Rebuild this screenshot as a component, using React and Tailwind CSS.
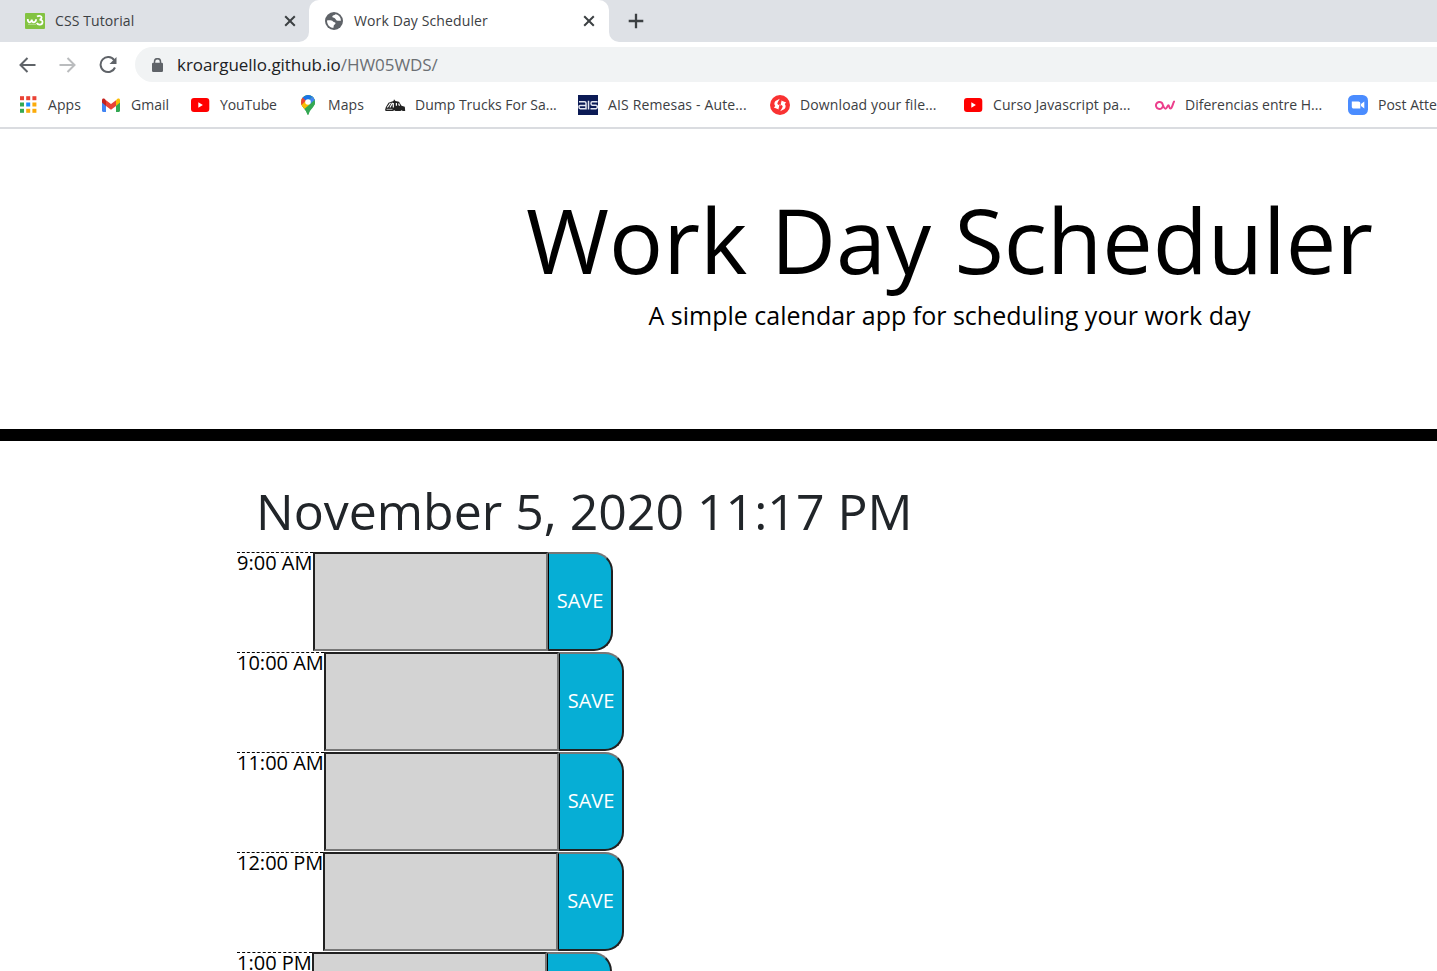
import React from "react";

const chromeFont = "font-['Open_Sans',sans-serif]";

function AppsIcon() {
  const c = ["#ea4335", "#ea4335", "#ea4335", "#34a853", "#1a8cff", "#fbab0a", "#34a853", "#fbab0a", "#fbab0a"];
  return (
    <svg width="20" height="20" viewBox="0 0 20 20">
      {c.map((f, i) => (
        <rect key={i} x={2 + (i % 3) * 6.2} y={1.2 + Math.floor(i / 3) * 6.3} width="4" height="4" fill={f} />
      ))}
    </svg>
  );
}

function GmailIcon() {
  return (
    <svg width="20" height="20" viewBox="0 0 20 20">
      <path d="M1 6v9.800c0 .7.5 1.200 1.200 1.200H5V8.500z" fill="#4285f4" />
      <path d="M15 8.500V17h2.800c.7 0 1.200-.5 1.200-1.200V6z" fill="#34a853" />
      <path d="M5 5.200V11l5 3.800 5-3.800V5.200L10 9z" fill="#ea4335" />
      <path d="M1 5v2.600L5 11V5.200L3.800 4C2.500 3 1 3.600 1 5z" fill="#c5221f" />
      <path d="M19 5v2.600L15 11V5.200L16.200 4C17.500 3 19 3.600 19 5z" fill="#fbbc04" />
    </svg>
  );
}

function YouTubeIcon() {
  return (
    <svg width="20" height="20" viewBox="0 0 20 20">
      <rect x="0" y="3" width="18.300" height="14" rx="3" fill="#f00" />
      <path d="M7.300 7.300v5.400l4.600-2.700z" fill="#fff" />
    </svg>
  );
}

function MapsIcon() {
  return (
    <svg width="18" height="20" viewBox="0 0 18 20">
      <defs>
        <clipPath id="pin">
          <path d="M8 0a7 7 0 0 0-7 7c0 2 .7 3.500 1.800 5C4.700 14.500 6.500 16 7.200 19c.3 1.200 1.300 1.200 1.600 0 .7-3 2.500-4.500 4.400-7C14.300 10.500 15 9 15 7a7 7 0 0 0-7-7z" />
        </clipPath>
      </defs>
      <g clipPath="url(#pin)">
        <path d="M0 0h18v20H0z" fill="#34a853" />
        <path d="M0 3L6 6.500 8 7 2 14H0z" fill="#fbbc04" />
        <path d="M0 2l4.500 .2L8 6 2 11.500 0 8z" fill="#ea4335" />
        <path d="M2.500 2.500L7 6.500 13 1 8-1z" fill="#1a73e8" />
        <path d="M7 7.500L13 .8 17 6.500 11 7z" fill="#4285f4" />
        <path d="M12.500 1L16 5v4l-6 5-3 6-4.500-8z" fill="#34a853" />
        <path d="M8 6.500L12.700 1 15 4.500 10 9z" fill="#4285f4" />
        <path d="M1 10.500L5.500 6 9.500 9.500 3.800 14.500z" fill="#fbbc04" />
      </g>
      <circle cx="8" cy="7" r="2.800" fill="#fff" />
    </svg>
  );
}

function TruckIcon() {
  return (
    <svg width="21" height="20" viewBox="0 0 21 20">
      <path d="M0 15.300l.8-3 2.700-4.500L8.500 6l.5-1.700L10.500 6l3.500.8 2.500 4 3.300 1 .4 4.200h-2.500l-1-.8-1.300.8h-5l-1-.8-1.500.8H1z" fill="#222" />
      <path d="M2.300 12.500L5.500 8M5 12.500l2.500-4.700M8.300 8v4.500M11.400 8v2.800M13.600 8.500l.9 2.300" stroke="#fff" strokeWidth="1.200" />
      <path d="M1.500 14.300h6" stroke="#ddd" strokeWidth=".8" />
    </svg>
  );
}

function AisIcon() {
  return (
    <svg width="20" height="20" viewBox="0 0 20 20">
      <path d="M0 0h20v20H0z" fill="#0b1a55" />
      <path d="M1 6.700h5.500q1.500 0 1.500 1.500V13.700H2.300q-1.300 0-1.300-1.700t1.300-1.600H8M10.500 5.800v8.800M19.500 6.700h-5.300q-1.200 0-1.200 1.700t1.200 1.800h3.800q1.300 0 1.300 1.700t-1.300 1.800H12.500" fill="none" stroke="#e4e6f0" strokeWidth="1.500" />
    </svg>
  );
}

function DownloadIcon() {
  return (
    <svg width="20" height="20" viewBox="0 0 20 20">
      <circle cx="10" cy="10" r="10" fill="#f93232" />
      <path d="M9.800 3.800L5.500 6Q3.300 8.800 5.300 11L3.800 12.500 8.800 14.500 10 9.300 8.200 9.900Q6.500 8.500 8 6.800z" fill="#fff" />
      <path d="M10.200 16.200L14.500 14Q16.700 11.200 14.700 9L16.200 7.500 11.200 5.500 10 10.700 11.800 10.100Q13.500 11.500 12 13.200z" fill="#fff" />
      <path d="M11.200 5.500L8.800 14.500" stroke="#f93232" strokeWidth=".9" />
    </svg>
  );
}

function OwIcon() {
  return (
    <svg width="20" height="20" viewBox="0 0 20 20">
      <path d="M8 10.500a3.500 3.500 0 1 1-1.200-2.700C8 9 8.500 13.700 10.500 13.700c1.600 0 1.700-3.500 3-3.500.8 0 .5 3.300 2 3.300 1.700 0 2.300-5 3.600-7" fill="none" stroke="#ec3f8c" strokeWidth="2" strokeLinecap="round" />
    </svg>
  );
}

function ZoomIcon() {
  return (
    <svg width="20" height="20" viewBox="0 0 20 20">
      <rect width="20" height="20" rx="5.500" fill="#4a8cff" />
      <path d="M3.800 6.500h6.700c1 0 1.800.8 1.800 1.800v5.200H5.600c-1 0-1.800-.8-1.800-1.800zM13 9l3.300-2.500v7L13 11z" fill="#fff" />
    </svg>
  );
}

const bookmarks = [
  { Icon: AppsIcon, label: "Apps", w: "w-[83px]", gap: "gap-[10px]", t: "tracking-[0.1px]" },
  { Icon: GmailIcon, label: "Gmail", w: "w-[90px]", gap: "gap-[10px]", t: "tracking-[0px]" },
  { Icon: YouTubeIcon, label: "YouTube", w: "w-[109px]", gap: "gap-[9px]", t: "tracking-[-0.1px]" },
  { Icon: MapsIcon, label: "Maps", w: "w-[85px]", gap: "gap-[10px]", t: "tracking-[0.1px]" },
  { Icon: TruckIcon, label: "Dump Trucks For Sa...", w: "w-[193px]", gap: "gap-[9px]", t: "tracking-[0px]" },
  { Icon: AisIcon, label: "AIS Remesas - Aute...", w: "w-[192px]", gap: "gap-[10px]", t: "tracking-[0.15px]" },
  { Icon: DownloadIcon, label: "Download your file...", w: "w-[194px]", gap: "gap-[10px]", t: "tracking-[0.12px]" },
  { Icon: YouTubeIcon, label: "Curso Javascript pa...", w: "w-[191px]", gap: "gap-[9px]", t: "tracking-[0.1px]" },
  { Icon: OwIcon, label: "Diferencias entre H...", w: "w-[193px]", gap: "gap-[10px]", t: "tracking-[0.02px]" },
  { Icon: ZoomIcon, label: "Post Atte", w: "w-[140px]", gap: "gap-[10px]", t: "tracking-[0px]" },
];

const slots = [
  { time: "9:00 AM", w: "w-[76px]", save: "w-[65px]" },
  { time: "10:00 AM", w: "w-[87px]", save: "w-[65px]" },
  { time: "11:00 AM", w: "w-[87px]", save: "w-[65px]" },
  { time: "12:00 PM", w: "w-[86px]", save: "w-[66px]" },
  { time: "1:00 PM", w: "w-[75px]", save: "w-[65px]" },
];

function Cross() {
  return (
    <svg width="12" height="12" viewBox="0 0 12 12">
      <path d="M1.200 1.200l9.600 9.600M10.800 1.200L1.200 10.800" stroke="#3c4043" strokeWidth="2" />
    </svg>
  );
}

function TabStrip() {
  return (
    <div className="flex h-[42px] text-[14px] text-[#3c4043]">
      <div className="flex w-[309px] items-center rounded-br-[10px] bg-[#dee1e6] pl-[25px]">
        <svg width="20" height="16" viewBox="0 0 20 16">
          <rect width="20" height="16" rx="1" fill="#83c341" />
          <path d="M2.800 6c-.3 4.300 3.400 4.300 3.900 .5.200 3.800 4.200 3.800 4.400-.2M12 3.500c2-1.300 5-.5 4.500 1.500-.2 1-1 1.600-2 1.700 2 0 3.200 1 3 2.600-.3 2.700-4.500 3.200-5.700.7" fill="none" stroke="#fff" strokeWidth="1.800" />
          <path d="M3 11.300h8" stroke="#b9de92" strokeWidth="1" />
        </svg>
        <span className="ml-[10px] w-[229px] whitespace-nowrap pb-[2px] tracking-[0.1px]">CSS Tutorial</span>
        <Cross />
      </div>
      <div className="w-[300px] bg-[linear-gradient(#dee1e6_20px,#fff_20px)]">
        <div className="flex h-full items-center rounded-t-[10px] bg-white pl-[16px]">
          <svg width="18" height="18" viewBox="0 0 18 18">
            <circle cx="9" cy="9" r="9" fill="#5f6368" />
            <path d="M2 8.500c2.500-.3 5-.2 6 1 .8 1 2.500.3 2.500 1.800 0 1.200-1.500 1.200-1.800 2.500l-.2 2C4.500 15.800 2 12.500 2 8.500zM10.500 2.200c-1 1.200-3 .8-3.200 2.300-.2 1.300 1.500 1 2.500 1.700 1.200.8 1 2.600 3 2.600h3.100c.2-3-2-6.200-5.400-6.600z" fill="#fff" />
          </svg>
          <span className="ml-[11px] w-[229px] whitespace-nowrap pb-[2px] tracking-[0.12px]">Work Day Scheduler</span>
          <Cross />
        </div>
      </div>
      <div className="flex flex-1 items-center rounded-bl-[10px] bg-[#dee1e6] pl-[19px]">
        <svg width="16" height="16" viewBox="0 0 16 16">
          <path d="M8 .7v14.600M.7 8h14.600" stroke="#3c4043" strokeWidth="2.300" />
        </svg>
      </div>
    </div>
  );
}

function Toolbar() {
  return (
    <div className="flex h-[45px] items-center pl-[19px]">
      <svg className="mr-[23px]" width="17" height="16" viewBox="0 0 17 16">
        <path d="M16.500 8H1.800M8.500 1L1.500 8l7 7" fill="none" stroke="#5f6368" strokeWidth="2" />
      </svg>
      <svg className="mr-[23px]" width="17" height="16" viewBox="0 0 17 16">
        <path d="M.5 8h14.700M8.500 1l7 7-7 7" fill="none" stroke="#babcbe" strokeWidth="2" />
      </svg>
      <svg className="mr-[18px]" width="18" height="18" viewBox="0 0 18 18">
        <path d="M15.200 4.200A7.500 7.500 0 1 0 16 11.500" fill="none" stroke="#5f6368" strokeWidth="2" />
        <path d="M17.500 1v7h-7z" fill="#5f6368" />
      </svg>
      <div className="flex h-[35px] flex-1 items-center rounded-l-full bg-[#f1f3f4] pl-[17px]">
        <svg width="12" height="14" viewBox="0 0 12 14">
          <rect y="4.700" x="0" width="11" height="9.300" rx="1.200" fill="#5f6368" />
          <path d="M2.500 5.500V3.700a3 3 0 0 1 6 0v1.800" fill="none" stroke="#5f6368" strokeWidth="1.500" />
        </svg>
        <span className="ml-[13px] whitespace-nowrap text-[17px] tracking-[-0.05px] text-[#202124]">
          kroarguello.github.io<span className="text-[#6b6f73]">/HW05WDS/</span>
        </span>
      </div>
    </div>
  );
}

export default function App() {
  return (
    <div className="h-[971px] w-[1437px] overflow-hidden bg-white">
      <header className={chromeFont}>
        <TabStrip />
        <Toolbar />
        <div className="flex h-[42px] overflow-hidden border-b-2 border-[#dadce0] pl-[18px] pb-[4px] text-[14px] text-[#3c4043]">
          {bookmarks.map(({ Icon, label, w, gap, t }) => (
            <div key={label} className={`flex shrink-0 items-center whitespace-nowrap ${w} ${gap} ${t}`}>
              <Icon />
              <span className="pb-[2px]">{label}</span>
            </div>
          ))}
        </div>
      </header>
      <main className="font-['Open_Sans',sans-serif]">
        <section className="flex h-[312px] flex-col items-center border-b-[12px] border-black pl-[462px] pt-[56px] text-black">
          <h1 className="whitespace-nowrap text-[90px] leading-[108px]">Work Day Scheduler</h1>
          <p className="mt-[3px] whitespace-nowrap text-[25px] leading-[38px]">A simple calendar app for scheduling your work day</p>
        </section>
        <section className="pl-[237px] pt-[40px]">
          <p className="whitespace-nowrap pl-[19px] text-[50px] leading-[60px] text-[#212529]">November 5, 2020 11:17 PM</p>
          <div className="mt-[11px] text-[20px] leading-[20px]">
            {slots.map(({ time, w, save }) => (
              <div key={time} className="flex h-[100px] items-start">
                <div className={`shrink-0 whitespace-nowrap border-t border-dashed border-black text-black ${w}`}>{time}</div>
                <div className="h-[99px] w-[235px] border-2 border-t-[#212121] border-r-[#767676] border-b-[#767676] border-l-[#212121] bg-[#d3d3d3]" />
                <button className={`h-[99px] rounded-r-[19px] border-2 border-l border-t-[#767676] border-r-[#212121] border-b-[#212121] border-l-black bg-[#06aed5] pb-[2px] text-white ${save}`}>
                  SAVE
                </button>
              </div>
            ))}
          </div>
        </section>
      </main>
    </div>
  );
}
